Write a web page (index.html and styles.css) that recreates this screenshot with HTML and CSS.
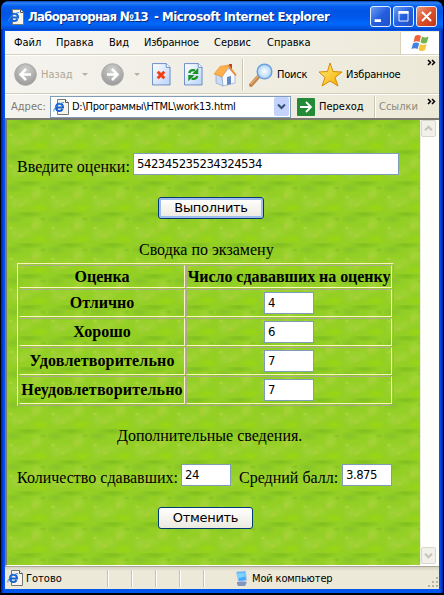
FILE: index.html
```html
<!DOCTYPE html>
<html lang="ru">
<head>
<meta charset="utf-8">
<title>Лабораторная №13</title>
<link rel="stylesheet" href="styles.css">
</head>
<body>
<svg class="defs" width="0" height="0" aria-hidden="true">
  <defs>
    <linearGradient id="paper" x1="0" y1="0" x2="1" y2="1"><stop offset="0" stop-color="#fff"/><stop offset="1" stop-color="#b9d3f8"/></linearGradient>
    <radialGradient id="nav" cx=".5" cy=".3" r=".7"><stop offset="0" stop-color="#d2d2d0"/><stop offset="1" stop-color="#999"/></radialGradient>
    <linearGradient id="gold" x1="0" y1="0" x2="1" y2="1"><stop offset="0" stop-color="#fff27a"/><stop offset="1" stop-color="#f5a800"/></linearGradient>
    <radialGradient id="lens"><stop offset="0" stop-color="#fff"/><stop offset="1" stop-color="#a9d3f5"/></radialGradient>
    <symbol id="iepage" viewBox="0 0 16 16">
      <path d="M4.500.5h8l3 3v12h-11z" fill="#f7f5ea" stroke="#777"/>
      <path d="M12.500.5v3h3" fill="#fff" stroke="#555"/>
      <path d="M3 8.500h7c0-5-7-5-7 0 0 4.400 5.300 4.300 6.500 1.500" fill="none" stroke="#1763cf" stroke-width="2"/>
      <path d="M1 12.500C-.5 11 5 4 11 3.500" fill="none" stroke="#3d8ee6"/>
    </symbol>
  </defs>
</svg>
<div class="window">
  <header class="title">
    <svg class="i16"><use href="#iepage"/></svg>
    <h1><span class="t1">Лабораторная №13</span><span class="t2">- Microsoft Internet Explorer</span></h1>
    <div class="controls">
      <svg class="ctl" viewBox="0 0 21 21"><path d="M4 15h7" stroke="#fff" stroke-width="3"/></svg>
      <svg class="ctl" viewBox="0 0 21 21"><path d="M5.500 5v10.500h10V5" fill="none" stroke="#fff"/><path d="M5 6h11" stroke="#fff" stroke-width="3"/></svg>
      <svg class="ctl close" viewBox="0 0 21 21"><path d="M5.500 5.500l10 10m0-10l-10 10" stroke="#fff" stroke-width="2.200"/></svg>
    </div>
  </header>
  <nav class="menu">
    <span class="m1">Файл</span><span class="m2">Правка</span><span class="m3">Вид</span><span class="m4">Избранное</span><span class="m5">Сервис</span><span class="m6">Справка</span>
    <div class="flag"><svg width="22" height="20" viewBox="0 0 22 20">
      <path d="M6 3q3-2 6 0l-1.500 6q-3-1.500-6 0z" fill="#ee6338"/>
      <path d="M13 3.500q3 2 6.500 0L18 9.500q-3 2-6.500 0z" fill="#72b34a"/>
      <path d="M4 10.500q3-2 6.200 0L8.500 16q-3-1.500-6 0z" fill="#3f83dc"/>
      <path d="M11 11q3 2 6.500 0L16 17q-3 2-6.500 0z" fill="#f4c43a"/></svg></div>
  </nav>
  <div class="tools">
    <svg class="back" width="23" height="23" viewBox="0 0 23 23"><circle cx="11.500" cy="11.500" r="10.800" fill="url(#nav)" stroke="#aaa"/><path d="M12 6l-5.500 5.500L12 17M7 11.500h10" fill="none" stroke="#fff" stroke-width="2.500"/></svg>
    <span class="grey backtext">Назад</span><i class="tri"></i>
    <svg class="fwd" width="23" height="23" viewBox="0 0 23 23"><circle cx="11.500" cy="11.500" r="10.800" fill="url(#nav)" stroke="#aaa"/><path d="M11 6l5.500 5.500L11 17M16 11.500H6" fill="none" stroke="#fff" stroke-width="2.500"/></svg>
    <i class="tri"></i>
    <svg class="stop" width="19" height="23" viewBox="0 0 20 24"><path d="M.5.500h14.500l4 4v18.500H.5z" fill="url(#paper)" stroke="#6989c6"/><path d="M15 .5v4h4" fill="#fff" stroke="#6989c6"/><path d="M6 9l7 7m0-7l-7 7" stroke="#f43c0c" stroke-width="3"/></svg>
    <svg class="refresh" width="19" height="23" viewBox="0 0 20 24"><path d="M.5.500h14.500l4 4v18.500H.5z" fill="url(#paper)" stroke="#6989c6"/><path d="M15 .5v4h4" fill="#fff" stroke="#6989c6"/><path d="M5.500 10.500q1-4 6-2.800M14 13.500q-1 4-6 2.800" fill="none" stroke="#189224" stroke-width="2.400"/><path d="M15 5v6.500H8.500zM4.500 19v-6.500H11z" fill="#189224"/></svg>
    <svg class="home" width="24" height="24" viewBox="0 0 24 24"><path d="M16 1h3v7h-3z" fill="#c2452a"/><path d="M3 11l6 3 1 9-7-3z" fill="#c9dbf7" stroke="#8ca3cb" stroke-width=".7"/><path d="M9 13l7-8 6 7v8l-12 3z" fill="#f6f9ff" stroke="#8ca3cb" stroke-width=".7"/><path d="M1 11L7 3.500l9-1.500-7 12-4-2z" fill="#ffb14d" stroke="#e99131" stroke-width=".7"/><path d="M15.500 3l7.500 9.500" stroke="#ee8d2d" stroke-width="2"/><path d="M14 14l4-1v8l-4 1z" fill="#6388c6"/></svg>
    <i class="sep"></i>
    <svg class="search" width="24" height="24" viewBox="0 0 24 24"><path d="M2 22l8-9" stroke="#c9874d" stroke-width="4" stroke-linecap="round"/><path d="M2 21l7-8" stroke="#efc28f"/><circle cx="15.500" cy="8.500" r="7.300" fill="url(#lens)" stroke="#6ba0dc" stroke-width="1.500"/></svg>
    <span class="searchtext">Поиск</span>
    <svg class="star" width="25" height="25" viewBox="0 0 25 25"><path d="M12 1l3 8.500 9 .5-7 5.500 3 8.500-8-5-8 5 3-8.500L1 10l8.500-.5z" fill="url(#gold)" stroke="#d88b09"/></svg>
    <span class="favtext">Избранное</span><svg class="chev" width="9" height="7" viewBox="0 0 9 7"><path d="M1 1l2.500 2.500L1 6M5 1l2.500 2.500L5 6" fill="none" stroke="#000" stroke-width="1.500"/></svg>
  </div>
  <div class="address">
    <span class="addrlabel">Адрес:</span>
    <div class="combo"><svg class="i16"><use href="#iepage"/></svg><span class="url">D:\Программы\HTML\work13.html</span><svg class="drop" width="15" height="19" viewBox="0 0 15 19"><path d="M4 7.500l3.500 3.500L11 7.500" fill="none" stroke="#354f78" stroke-width="2"/></svg></div>
    <svg class="go" width="18" height="18" viewBox="0 0 18 18"><rect width="18" height="18" rx="1" fill="#238b35"/><path d="M3 9h11M9 4l5 5-5 5" fill="none" stroke="#fff" stroke-width="1.800"/></svg>
    <span class="gotext">Переход</span><i class="sep small"></i><span class="links">Ссылки</span><svg class="chev" width="9" height="7" viewBox="0 0 9 7"><path d="M1 1l2.500 2.500L1 6M5 1l2.500 2.500L5 6" fill="none" stroke="#000" stroke-width="1.500"/></svg>
  </div>
  <div class="view">
    <main>
      <div class="row first"><span class="l1">Введите оценки:</span><span class="field wide">542345235234324534</span></div>
      <div class="btn run"><span>Выполнить</span></div>
      <div class="caption"><span>Сводка по экзамену</span></div>
      <div class="table">
        <div class="cell"><span>Оценка</span></div><div class="cell"><span class="h2">Число сдававших на оценку</span></div>
        <div class="cell"><span>Отлично</span></div><div class="cell"><span class="field">4</span></div>
        <div class="cell"><span>Хорошо</span></div><div class="cell"><span class="field">6</span></div>
        <div class="cell"><span class="g3">Удовлетворительно</span></div><div class="cell"><span class="field">7</span></div>
        <div class="cell"><span class="g4">Неудовлетворительно</span></div><div class="cell"><span class="field">7</span></div>
      </div>
      <div class="extra"><span>Дополнительные сведения.</span></div>
      <div class="row totals"><span class="l2">Количество сдававших:</span><span class="field">24</span><span class="l3">Средний балл:</span><span class="field">3.875</span></div>
      <div class="btn cancel"><span>Отменить</span></div>
    </main>
    <div class="scroll"><svg width="15" height="17" viewBox="0 0 15 17"><path d="M3.500 10.500l4-4 4 4" fill="none" stroke="#c5c5bc" stroke-width="2.500"/></svg><svg width="15" height="17" viewBox="0 0 15 17"><path d="M3.500 6.500l4 4 4-4" fill="none" stroke="#c5c5bc" stroke-width="2.500"/></svg></div>
  </div>
  <footer>
    <div class="ready"><svg class="i16"><use href="#iepage"/></svg><span>Готово</span></div><i></i><i></i><i></i><i></i><i class="last"></i>
    <div class="zone"><svg width="14" height="17" viewBox="0 0 14 17"><path d="M2 12l5-1 5 1-2 4-7 0-1-2z" fill="#8296c0"/><path d="M1.500 2l9-1 1 9.500-8 1z" fill="#43a8f5" stroke="#b7cbed"/><path d="M2.500 3l7-.5 .5 4-7 2z" fill="#7bd4ff"/></svg><span>Мой компьютер</span></div>
    <svg class="grip" width="12" height="12" viewBox="0 0 12 12" fill="#b8b4a0"><path d="M9 1h2v2H9zM5 5h2v2H5zM9 5h2v2H9zM1 9h2v2H1zM5 9h2v2H5zM9 9h2v2H9z"/></svg>
  </footer>
</div>
</body>
</html>
```
FILE: styles.css
```css
* { box-sizing: border-box; }
body { margin: 0; background: #000; overflow: hidden; font: 11px "DejaVu Sans Condensed", "DejaVu Sans", sans-serif; font-stretch: condensed; color: #000; }
span { white-space: nowrap; }
svg { flex: none; display: block; }
.defs { position: absolute; }
i { flex: none; }
.window { width: 442px; height: 592px; margin: 1px 0 0 1px; padding: 1px 4px 4px; background: linear-gradient(90deg, #0019c8, #0055ec 3px, #0055ec 439px, #0019a8); border-radius: 8px 8px 0 0; display: flex; flex-direction: column; overflow: hidden; }
.i16 { width: 16px; height: 16px; }
.title { height: 29px; margin: -1px -4px 0; padding: 2px 6px 0 7px; display: flex; align-items: center; flex: none; background: linear-gradient(#0846c0 0, #2c83f5 2px, #0660ee 5px, #0054e3 10px, #0058ea 16px, #0068fd 23px, #0050d8 28px, #003bb5); }
h1 { margin: 0 0 0 4px; display: flex; font-size: 13px; line-height: 16px; color: #fff; text-shadow: 1px 1px #0a2a7c; }
.t1 { width: 126px; letter-spacing: -.7px; }
.t2 { letter-spacing: -.45px; }
.controls { display: flex; gap: 2px; margin-left: auto; }
.ctl { width: 21px; height: 21px; border-radius: 3px; background: linear-gradient(135deg, #6d9df5, #245fdf 50%, #2051cb); border: 1px solid #e4edff; }
.close { background: linear-gradient(135deg, #ee9b80, #dc512c 50%, #bf3514); }
.menu { height: 24px; margin-top: 1px; padding-left: 9px; display: flex; align-items: center; background: linear-gradient(90deg, #f8f8f6, #ece9d8); border-bottom: 1px solid #d8d2bd; flex: none; }
.m1 { width: 42px; } .m2 { width: 53px; } .m3 { width: 35px; } .m4 { width: 70px; letter-spacing: -.15px; } .m5 { width: 53px; }
.flag { width: 39px; height: 22px; margin-left: auto; background: #fff; border-left: 1px solid #d8d2bd; display: flex; align-items: center; padding-left: 8px; }
.tools { height: 39px; display: flex; align-items: center; padding: 0 3px 0 9px; background: linear-gradient(90deg, #f4f3ee, #ece9d8); border-top: 1px solid #fff; border-bottom: 1px solid #d4cfba; flex: none; }
.grey { color: #aca899; }
.backtext { width: 31px; margin-left: 4px; }
.tri { border: 3px solid transparent; border-top-color: #b5b2a4; border-bottom: 0; margin-left: 10px; width: 6px; }
.fwd { margin-left: 13px; }
.stop { margin-left: 12px; }
.refresh { margin-left: 13px; }
.home { margin-left: 10px; }
.sep { width: 2px; height: 32px; border-left: 1px solid #cbc7b4; border-right: 1px solid #fff; margin-left: 5px; }
.search { margin-left: 5px; }
.searchtext { margin-left: 4px; width: 30px; letter-spacing: -.2px; }
.star { margin-left: 11px; }
.favtext { margin-left: 3px; letter-spacing: -.2px; }
.chev { margin: 3px 0 0 auto; align-self: flex-start; }
.address { height: 24px; padding: 0 3px 0 6px; display: flex; align-items: center; background: linear-gradient(90deg, #f4f3ee, #ece9d8); border-top: 1px solid #fff; flex: none; }
.addrlabel { color: #7d7b73; width: 39px; }
.combo { width: 241px; height: 22px; background: #fff; border: 1px solid #7f9db9; display: flex; align-items: center; padding: 0 1px 0 2px; }
.url { margin-left: 3px; letter-spacing: -.25px; }
.drop { margin-left: auto; background: #c3d3fb; border-radius: 2px; }
.go { margin-left: 6px; }
.gotext { margin-left: 4px; width: 44px; }
.small { height: 22px; margin-left: 11px; }
.links { margin-left: 3px; color: #8c897c; }
.view { height: 448px; border: 1px solid #7c7a70; border-width: 2px 0 1px 2px; display: flex; border-bottom-color: #fff; flex: none; }
main { width: 413px; padding: 33px 0 0 10px; font-family: "Liberation Serif", serif; font-size: 16px; background:
  radial-gradient(ellipse 3px 2px at 5px 16px, #b8da4cbb, transparent),
  radial-gradient(ellipse 4px 3px at 15px 24px, #b6cf43bb, transparent),
  radial-gradient(ellipse 3px 5px at 28px 15px, #b9c94799, transparent),
  radial-gradient(ellipse 4px 2px at 37px 7px, #7fbc2cbb, transparent),
  radial-gradient(ellipse 11px 5px at 8px 7px, #80be2cbb, transparent),
  radial-gradient(ellipse 9px 7px at 20px 20px, #a6d53baa, transparent),
  radial-gradient(ellipse 8px 9px at 31px 12px, #add842aa, transparent),
  radial-gradient(ellipse 12px 5px at 34px 27px, #9bd80dcc, transparent),
  radial-gradient(ellipse 9px 9px at 9px 22px, #a5d342bb, transparent),
  radial-gradient(ellipse 16px 4px at 22px 2px, #79ba1ecc, transparent), #93cf24;
  background-size: 42px 31px; background-position: -1px -1px; }
.row { display: flex; height: 23px; }
.field { display: block; width: 50px; height: 22px; border: 1px solid #7f9db9; background: #fff; font: 13px/20px "DejaVu Sans Condensed", sans-serif; font-stretch: condensed; padding-left: 3px; text-align: left; letter-spacing: -.5px; }
.wide { width: 266px; }
.l1 { width: 116px; line-height: 27px; }
.btn { width: 106px; height: 22px; margin: 21px 0 0 141px; border: 1px solid #003c74; border-radius: 3px; background: linear-gradient(#fff, #ece9df); font: 13px/19px "DejaVu Sans", sans-serif; letter-spacing: -.3px; display: flex; justify-content: center; }
.run { box-shadow: inset 0 0 0 2px #9ebcef; }
.caption { height: 18px; line-height: 18px; margin: 22px 0 4px 122px; }
.table { width: 377px; height: 143px; border: 1px solid #f5f6b8; border-right-color: #a9a58f; border-bottom-color: #a9a58f; display: grid; grid-template-columns: 166px 206px; grid-template-rows: 23px repeat(4, 28px); gap: 1px; padding: 1px 0 0 1px; font-weight: bold; }
.cell { border: 1px solid #ada895; border-right-color: #f8f8bc; border-bottom-color: #f8f8bc; display: flex; align-items: center; justify-content: center; }
.cell .field { font-weight: normal; }
.h2 { letter-spacing: -.05px; }
.g3, .g4 { letter-spacing: .15px; }
.extra { height: 20px; line-height: 20px; margin: 20px 0 0 100px; }
.totals { margin-top: 18px; }
.l2 { width: 164px; line-height: 27px; }
.l3 { margin-left: 8px; width: 103px; line-height: 27px; }
.cancel { width: 95px; margin-top: 20px; }
.scroll { width: 17px; flex: 1; background: #fefefa; border-left: 1px solid #eeede5; display: flex; flex-direction: column; justify-content: space-between; align-items: center; padding: 0 3px 1px 0; }
.scroll svg { background: #f1f0e9; border: 1px solid #d8d7ce; border-radius: 2px; }
footer { flex: 1; border-top: 1px solid #aca899; background: linear-gradient(#d5d1c0, #ece9d8 4px, #ece9d8); display: flex; align-items: center; }
.ready { width: 102px; padding-left: 2px; display: flex; align-items: center; gap: 3px; }
footer i { width: 24px; height: 17px; border-left: 1px solid #c5c2b0; box-shadow: inset 1px 0 #fff; }
.last { width: 29px; }
.zone { display: flex; align-items: center; gap: 3px; margin-left: 3px; letter-spacing: -.15px; }
.grip { margin: 8px 0 0 auto; }
```
